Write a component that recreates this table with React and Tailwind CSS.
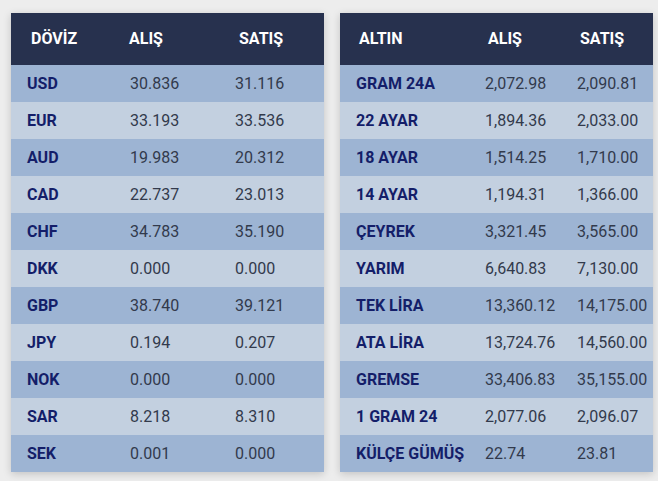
import React from 'react';

const doviz = [
  ['USD', '30.836', '31.116'],
  ['EUR', '33.193', '33.536'],
  ['AUD', '19.983', '20.312'],
  ['CAD', '22.737', '23.013'],
  ['CHF', '34.783', '35.190'],
  ['DKK', '0.000', '0.000'],
  ['GBP', '38.740', '39.121'],
  ['JPY', '0.194', '0.207'],
  ['NOK', '0.000', '0.000'],
  ['SAR', '8.218', '8.310'],
  ['SEK', '0.001', '0.000'],
];

const altin = [
  ['GRAM 24A', '2,072.98', '2,090.81'],
  ['22 AYAR', '1,894.36', '2,033.00'],
  ['18 AYAR', '1,514.25', '1,710.00'],
  ['14 AYAR', '1,194.31', '1,366.00'],
  ['ÇEYREK', '3,321.45', '3,565.00'],
  ['YARIM', '6,640.83', '7,130.00'],
  ['TEK LİRA', '13,360.12', '14,175.00'],
  ['ATA LİRA', '13,724.76', '14,560.00'],
  ['GREMSE', '33,406.83', '35,155.00'],
  ['1 GRAM 24', '2,077.06', '2,096.07'],
  ['KÜLÇE GÜMÜŞ', '22.74', '23.81'],
];

const RateTable = ({ title, rows, cols, headPad }) => {
  return (
    <div className="w-[313px] shadow-[0_2px_8px_rgba(0,0,0,0.18)]">
      <div className={`grid ${cols} h-[52px] items-center bg-[#27314e] text-white font-bold text-[16px]`}>
        <div className={headPad[0]}>{title}</div>
        <div className={headPad[1]}>ALIŞ</div>
        <div className={headPad[2]}>SATIŞ</div>
      </div>
      {rows.map((row, i) => (
        <div
          key={row[0]}
          className={`grid ${cols} h-[37px] items-center text-[16px] ${i % 2 === 0 ? 'bg-[#9db4d3]' : 'bg-[#c3d0e0]'}`}
        >
          <div className="pl-4 font-bold text-[#141e69] whitespace-nowrap">{row[0]}</div>
          <div className="pl-4 text-[#323a4c]">{row[1]}</div>
          <div className="pl-4 text-[#323a4c]">{row[2]}</div>
        </div>
      ))}
    </div>
  );
};

export default function App() {
  return (
    <div className="w-[658px] h-[481px] bg-[#ededed] flex items-start gap-4 pl-[11px] pt-[13px] font-['Roboto',sans-serif]">
      <RateTable
        title="DÖVİZ"
        rows={doviz}
        cols="grid-cols-[103px_105px_1fr]"
        headPad={['pl-5', 'pl-[15px]', 'pl-5']}
      />
      <RateTable
        title="ALTIN"
        rows={altin}
        cols="grid-cols-[129px_92px_1fr]"
        headPad={['pl-[19px]', 'pl-[19px]', 'pl-[19px]']}
      />
    </div>
  );
}
